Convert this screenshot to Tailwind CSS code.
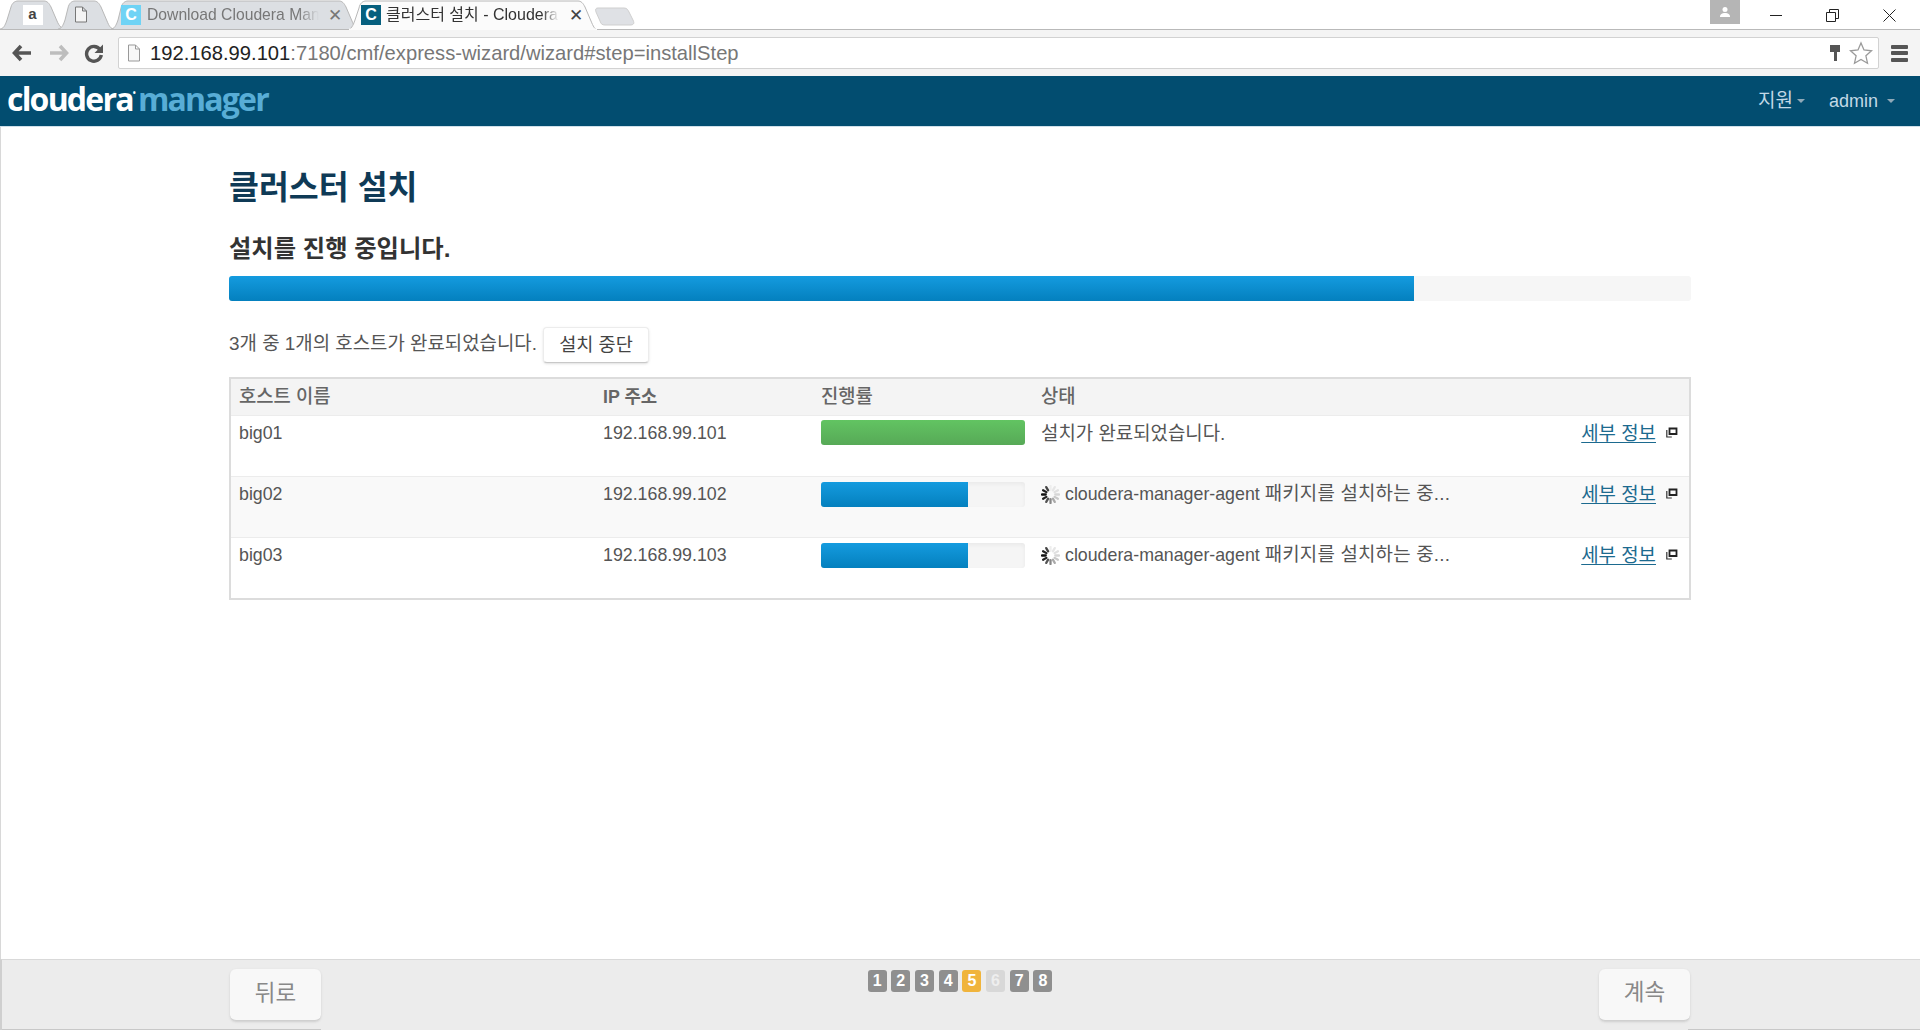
<!DOCTYPE html>
<html lang="ko">
<head>
    <meta charset="UTF-8">
    <title>클러스터 설치 - Cloudera Manager</title>
    <script src="https://cdn.jsdelivr.net/npm/@tailwindcss/browser@4"></script>
</head>
<body class="bg-white font-['Liberation_Sans','Noto_Sans_CJK_KR',sans-serif] text-[#555]">

<div class="h-[1030px] w-[1920px] overflow-hidden flex flex-col">

    <!-- Tab strip -->
    <div class="h-[30px] flex items-start relative border-b border-[#b9b9b9] bg-white">
        <div class="relative w-[66px] h-[30px] flex items-center justify-center">
            <svg class="absolute inset-0" width="66" height="30"><path d="M0 29C3 29 5 26 7 20L11 7C12 3 15 1 18 1L44 1C47 1 49 3 51 7L57 21C59 26 62 29 66 29" fill="#dcdfe3" stroke="#b8b8b8"/></svg>
            <span class="relative w-[20px] h-[20px] -ml-[1px] -mt-[1px] bg-white text-[15px] font-bold text-[#444] flex items-center justify-center">a</span>
        </div>
        <div class="relative w-[56px] h-[30px] -ml-[8px] flex items-center justify-center pr-[10px]">
            <svg class="absolute inset-0" width="56" height="30"><path d="M0 29C3 29 5 26 7 20L10 8C11 3 14 1 17 1L36 1C39 1 41 3 43 7L49 21C51 26 53 29 56 29" fill="#dcdfe3" stroke="#b8b8b8"/></svg>
            <svg class="relative -mt-[1px]" width="14" height="17" viewBox="0 0 14 17"><path d="M1.500 1h7l4 4v11h-11z M8.500 1v4h4" fill="#f4f4f4" stroke="#777"/></svg>
        </div>
        <div class="relative w-[248px] h-[30px] -ml-[3px] flex items-center pl-[10px]">
            <svg class="absolute inset-0" width="248" height="30"><path d="M0 29C3 29 5 26 7 20L10 8C11 3 14 1 17 1L228 1C231 1 233 3 235 7L241 21C243 26 245 29 248 29" fill="#dcdfe3" stroke="#b8b8b8"/></svg>
            <span class="relative w-[20px] h-[20px] -mt-[1px] bg-[#6fd3f5] text-white text-[16px] font-bold flex items-center justify-center">C</span>
            <span class="relative ml-[6px] w-[172px] overflow-hidden whitespace-nowrap text-[15.700px] text-[#777] [mask-image:linear-gradient(to_right,black_88%,transparent)]">Download Cloudera Man</span>
            <span class="relative ml-[9px] text-[17px] leading-none text-[#777]">✕</span>
        </div>
        <div class="relative w-[250px] h-[30px] -ml-[11px] flex items-center pl-[13px]">
            <svg class="absolute inset-0" width="250" height="30"><path d="M0 30C3 29 5 26 7 20L11 8C12 3 15 1 18 1L230 1C233 1 235 3 237 7L243 21C245 26 247 30 250 30Z" fill="#fbfbfb" stroke="#b8b8b8"/><line x1="1" y1="29.500" x2="249" y2="29.500" stroke="#fbfbfb" stroke-width="2"/></svg>
            <span class="relative w-[20px] h-[20px] -mt-[1px] bg-[#07607f] text-white text-[16px] font-bold flex items-center justify-center">C</span>
            <span class="relative ml-[5px] w-[173px] overflow-hidden whitespace-nowrap text-[16px] text-[#333] [mask-image:linear-gradient(to_right,black_90%,transparent)]">클러스터 설치 - Cloudera</span>
            <span class="relative ml-[10px] text-[17px] leading-none text-[#444]">✕</span>
        </div>
        <svg class="-ml-[3px] mt-[7px]" width="42" height="19"><path d="M3 1L29 1C32 1 33 3 34 5L38 13C40 17 38 18 35 18L10 18C7 18 6 17 5 14L1 5C0 2 1 1 3 1Z" fill="#dfe1e5" stroke="#cfcfcf"/></svg>

        <!-- Window controls -->
        <div class="absolute top-0 left-[1710px] w-[30px] h-[24px] bg-[#b5b5b5] flex items-center justify-center">
            <svg width="12" height="12" viewBox="0 0 12 12" fill="#fff"><circle cx="6" cy="3.500" r="2.500"/><path d="M1 11c0-3 2-4 5-4s5 1 5 4z"/></svg>
        </div>
        <div class="absolute top-[9px] left-[1770px] flex gap-[44px]">
            <svg width="12" height="13"><line x1="0" y1="6.500" x2="12" y2="6.500" stroke="#222"/></svg>
            <svg width="13" height="13" class="-mr-[1px]"><path d="M0.500 3.500h9v9h-9z M3.500 3.500v-3h9v9h-3" fill="none" stroke="#222"/></svg>
            <svg width="13" height="13" class="ml-[1px]"><path d="M0.500 0.500l12 12M12.500 0.500l-12 12" stroke="#222"/></svg>
        </div>
    </div>

    <!-- Toolbar -->
    <div class="h-[46px] bg-[#f4f4f4] flex items-center relative">
        <div class="w-[118px] pl-[12px] flex items-center gap-[17px]">
            <svg width="20" height="18" viewBox="0 0 20 18"><path d="M9 2L2.500 9 9 16M3 9h16" fill="none" stroke="#555" stroke-width="3.600"/></svg>
            <svg width="20" height="18" viewBox="0 0 20 18"><path d="M11 2l6.500 7-6.500 7M17 9H1" fill="none" stroke="#bdbdbd" stroke-width="3.600"/></svg>
            <svg width="20" height="20" viewBox="0 0 20 20" class="-ml-[2px]"><path d="M16 6.500A7.400 7.400 0 1 0 17.300 12" fill="none" stroke="#555" stroke-width="3.400"/><path d="M19 1.500v8.500h-8.500z" fill="#555"/></svg>
        </div>
        <div class="w-[1761px] h-[32px] bg-white border border-[#d2d2d2] rounded-[2px] flex items-center pl-[8px]">
            <svg width="14" height="18" viewBox="0 0 14 18"><path d="M1.500 1h7l4 4v12h-11z M8.500 1v4h4" fill="#f8f8f8" stroke="#999"/></svg>
            <span class="ml-[9px] text-[20.200px] text-[#222] whitespace-nowrap">192.168.99.101<span class="text-[#777]">:7180/cmf/express-wizard/wizard#step=installStep</span></span>
            <div class="ml-auto flex items-center gap-[8px] pr-[5px]">
                <svg width="12" height="18" viewBox="0 0 12 18"><path d="M1 1h10v7H8v9H5V8H1z" fill="#555"/></svg>
                <svg width="24" height="24" viewBox="0 0 24 24"><path d="M12 2l3 7 7.500.8-5.600 5 1.600 7.400L12 18.400l-6.500 3.800 1.600-7.400-5.600-5L9 9z" fill="#fff" stroke="#9a9a9a" stroke-width="1.300"/></svg>
            </div>
        </div>
        <div class="ml-[12px] w-[17px] flex flex-col gap-[2.500px]">
            <div class="h-[4px] bg-[#555] rounded-[1px]"></div>
            <div class="h-[4px] bg-[#555] rounded-[1px]"></div>
            <div class="h-[4px] bg-[#555] rounded-[1px]"></div>
        </div>
    </div>

    <!-- Navbar -->
    <nav class="h-[51px] bg-[#024d70] border-b border-[#cfe0ea] flex items-center pl-[7px] pr-[25px]">
        <a class="flex items-baseline text-[32px] font-['Open_Sans'] font-bold tracking-[-1.800px] leading-none -mt-[5px]">
            <span class="text-white">cloudera</span><span class="text-[#fff] text-[8px] -translate-y-[15px]">•</span><span class="text-[#58add6] ml-[4px]">manager</span>
        </a>
        <div class="ml-auto flex items-center text-[18px] text-[#c3d9e6]">
            <span class="text-[19px] -ml-[1px] mt-[1px]">지원</span><span class="ml-[4px] border-x-[4px] border-x-transparent border-t-[4px] border-t-[#8fa9b8]"></span>
            <span class="ml-[24px]">admin</span><span class="ml-[9px] border-x-[4.500px] border-x-transparent border-t-[4px] border-t-[#8fa9b8]"></span>
        </div>
    </nav>

    <!-- Main -->
    <main class="flex-1 pl-[228px] pr-[229px] pt-[41px] border-l border-[#d8d8d8]">
        <h1 class="text-[32.500px] leading-[40px] font-bold text-[#0f3a56]">클러스터 설치</h1>
        <h2 class="mt-[26px] text-[24.300px] leading-[30px] font-bold text-[#333]">설치를 진행 중입니다.</h2>

        <div class="mt-[12px] h-[25px] w-[1462px] rounded-[3px] bg-[#f6f6f6] overflow-hidden">
            <div class="h-full w-[1185px] bg-linear-to-b from-[#149bdf] to-[#0480be]"></div>
        </div>

        <div class="mt-[26px] flex items-center h-[36px]">
            <span class="text-[18.900px] text-[#555] -mt-[1px]">3개 중 1개의 호스트가 완료되었습니다.</span>
            <button class="ml-[6px] w-[106px] h-[36px] bg-white rounded-[4px] border border-[#ececec] border-b-[#c8c8c8] shadow-sm text-[18.600px] text-[#444]">설치 중단</button>
        </div>

        <!-- Hosts table -->
        <div class="mt-[14px] w-[1462px] border-2 border-[#dcdcdc] text-[17.800px]">
            <div class="h-[36px] bg-[#f4f4f4] grid grid-cols-[364px_218px_220px_1fr] items-center font-bold text-[#666]">
                <div class="pl-[8px] font-medium text-[18.800px]">호스트 이름</div>
                <div class="pl-[8px]">IP 주소</div>
                <div class="pl-[8px] font-medium text-[18.800px]">진행률</div>
                <div class="pl-[8px] font-medium text-[18.800px]">상태</div>
            </div>

            <div class="h-[61px] border-t border-[#ececec] bg-white grid grid-cols-[364px_218px_220px_1fr] pt-[5px]">
                <div class="pl-[8px] leading-[25px]">big01</div>
                <div class="pl-[8px] leading-[25px]">192.168.99.101</div>
                <div class="pl-[8px]">
                    <div class="-mt-[1px] w-[204px] h-[25px] rounded-[3px] bg-linear-to-b from-[#62c462] to-[#57a957]"></div>
                </div>
                <div class="pl-[8px] pr-[11px] flex justify-between leading-[25px]">
                    <span class="text-[18.900px]">설치가 완료되었습니다.</span>
                    <span class="flex items-start">
                        <a class="text-[#1c6a8f] text-[18.900px] underline underline-offset-2">세부 정보</a>
                        <svg class="ml-[10px] mt-[6px]" width="12" height="11" viewBox="0 0 12 11"><path d="M3.500 1.500h7v5.500h-7z" fill="none" stroke="#222" stroke-width="1.800"/><path d="M0.800 3v7h5" fill="none" stroke="#333" stroke-width="1.200"/></svg>
                    </span>
                </div>
            </div>

            <div class="h-[61px] border-t border-[#ececec] bg-[#f9f9f9] grid grid-cols-[364px_218px_220px_1fr] pt-[5px]">
                <div class="pl-[8px] leading-[25px]">big02</div>
                <div class="pl-[8px] leading-[25px]">192.168.99.102</div>
                <div class="pl-[8px]">
                    <div class="w-[204px] h-[25px] rounded-[3px] bg-[#f5f5f5] shadow-inner overflow-hidden">
                        <div class="h-full w-[147px] bg-linear-to-b from-[#149bdf] to-[#0480be]"></div>
                    </div>
                </div>
                <div class="pl-[8px] pr-[11px] flex justify-between leading-[25px]">
                    <span class="flex items-center h-[25px]">
                        <svg width="19" height="19" viewBox="-10 -10 20 20" class="mr-[5px]" stroke-width="2.400" stroke-linecap="round">
                            <line y1="-5" y2="-9" stroke="#eee"/><line y1="-5" y2="-9" stroke="#e6e6e6" transform="rotate(30)"/><line y1="-5" y2="-9" stroke="#e0e0e0" transform="rotate(60)"/><line y1="-5" y2="-9" stroke="#d6d6d6" transform="rotate(90)"/><line y1="-5" y2="-9" stroke="#c8c8c8" transform="rotate(120)"/><line y1="-5" y2="-9" stroke="#aaa" transform="rotate(150)"/><line y1="-5" y2="-9" stroke="#888" transform="rotate(180)"/><line y1="-5" y2="-9" stroke="#555" transform="rotate(210)"/><line y1="-5" y2="-9" stroke="#222" transform="rotate(240)"/><line y1="-5" y2="-9" stroke="#111" transform="rotate(270)"/><line y1="-5" y2="-9" stroke="#222" transform="rotate(300)"/><line y1="-5" y2="-9" stroke="#444" transform="rotate(330)"/>
                        </svg>
                        <span class="-mt-[1px]">cloudera-manager-agent <span class="text-[18.900px] tracking-[0.200px]">패키지를 설치하는 중...</span></span>
                    </span>
                    <span class="flex items-start">
                        <a class="text-[#1c6a8f] text-[18.900px] underline underline-offset-2">세부 정보</a>
                        <svg class="ml-[10px] mt-[6px]" width="12" height="11" viewBox="0 0 12 11"><path d="M3.500 1.500h7v5.500h-7z" fill="none" stroke="#222" stroke-width="1.800"/><path d="M0.800 3v7h5" fill="none" stroke="#333" stroke-width="1.200"/></svg>
                    </span>
                </div>
            </div>

            <div class="h-[61px] border-t border-[#ececec] bg-white grid grid-cols-[364px_218px_220px_1fr] pt-[5px]">
                <div class="pl-[8px] leading-[25px]">big03</div>
                <div class="pl-[8px] leading-[25px]">192.168.99.103</div>
                <div class="pl-[8px]">
                    <div class="w-[204px] h-[25px] rounded-[3px] bg-[#f5f5f5] shadow-inner overflow-hidden">
                        <div class="h-full w-[147px] bg-linear-to-b from-[#149bdf] to-[#0480be]"></div>
                    </div>
                </div>
                <div class="pl-[8px] pr-[11px] flex justify-between leading-[25px]">
                    <span class="flex items-center h-[25px]">
                        <svg width="19" height="19" viewBox="-10 -10 20 20" class="mr-[5px]" stroke-width="2.400" stroke-linecap="round">
                            <line y1="-5" y2="-9" stroke="#eee"/><line y1="-5" y2="-9" stroke="#e6e6e6" transform="rotate(30)"/><line y1="-5" y2="-9" stroke="#e0e0e0" transform="rotate(60)"/><line y1="-5" y2="-9" stroke="#d6d6d6" transform="rotate(90)"/><line y1="-5" y2="-9" stroke="#c8c8c8" transform="rotate(120)"/><line y1="-5" y2="-9" stroke="#aaa" transform="rotate(150)"/><line y1="-5" y2="-9" stroke="#888" transform="rotate(180)"/><line y1="-5" y2="-9" stroke="#555" transform="rotate(210)"/><line y1="-5" y2="-9" stroke="#222" transform="rotate(240)"/><line y1="-5" y2="-9" stroke="#111" transform="rotate(270)"/><line y1="-5" y2="-9" stroke="#222" transform="rotate(300)"/><line y1="-5" y2="-9" stroke="#444" transform="rotate(330)"/>
                        </svg>
                        <span class="-mt-[1px]">cloudera-manager-agent <span class="text-[18.900px] tracking-[0.200px]">패키지를 설치하는 중...</span></span>
                    </span>
                    <span class="flex items-start">
                        <a class="text-[#1c6a8f] text-[18.900px] underline underline-offset-2">세부 정보</a>
                        <svg class="ml-[10px] mt-[6px]" width="12" height="11" viewBox="0 0 12 11"><path d="M3.500 1.500h7v5.500h-7z" fill="none" stroke="#222" stroke-width="1.800"/><path d="M0.800 3v7h5" fill="none" stroke="#333" stroke-width="1.200"/></svg>
                    </span>
                </div>
            </div>
        </div>
    </main>

    <!-- Footer -->
    <footer class="relative h-[71px] bg-[#ececec] border-t border-[#d9d9d9] border-l-2 border-l-[#cfcfcf] flex items-start justify-between pl-[228px] pr-[230px] pt-[9px]">
        <button class="w-[91px] h-[52px] bg-[#f8f8f8] rounded-[6px] border-b border-[#d0d0d0] shadow-sm text-[22.500px] text-[#888] pb-[1px]">뒤로</button>
        <div class="flex gap-[4.700px] pt-[1px] text-[16px] font-bold text-white">
            <span class="w-[19px] h-[22px] rounded-[3px] bg-[#8f8f8f] flex items-center justify-center">1</span>
            <span class="w-[19px] h-[22px] rounded-[3px] bg-[#8f8f8f] flex items-center justify-center">2</span>
            <span class="w-[19px] h-[22px] rounded-[3px] bg-[#8f8f8f] flex items-center justify-center">3</span>
            <span class="w-[19px] h-[22px] rounded-[3px] bg-[#8f8f8f] flex items-center justify-center">4</span>
            <span class="w-[19px] h-[22px] rounded-[3px] bg-[#f0b43c] flex items-center justify-center">5</span>
            <span class="w-[19px] h-[22px] rounded-[3px] bg-[#d8d8d8] text-[#eee] flex items-center justify-center">6</span>
            <span class="w-[19px] h-[22px] rounded-[3px] bg-[#8f8f8f] flex items-center justify-center">7</span>
            <span class="w-[19px] h-[22px] rounded-[3px] bg-[#8f8f8f] flex items-center justify-center">8</span>
        </div>
        <button class="w-[91px] h-[52px] bg-[#f8f8f8] rounded-[6px] border-b border-[#d0d0d0] shadow-sm text-[22.500px] text-[#888] pb-[3px]">계속</button>
        <div class="absolute bottom-0 left-0 w-[319px] h-px bg-[#c8c8c8]"></div>
        <div class="absolute bottom-0 right-0 w-[232px] h-px bg-[#c8c8c8]"></div>
    </footer>
</div>

</body>
</html>
